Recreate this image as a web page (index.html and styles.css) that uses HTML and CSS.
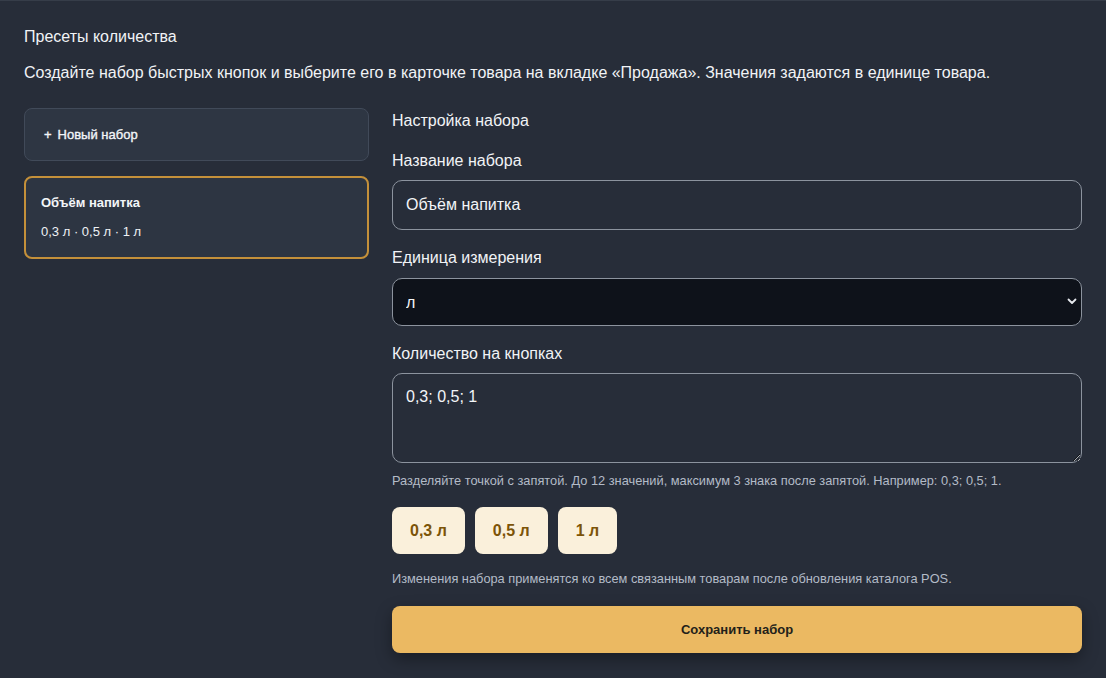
FILE: index.html
```html
<!DOCTYPE html>
<html lang="ru">
<head>
<meta charset="utf-8">
<title>Пресеты количества</title>
<link rel="stylesheet" href="styles.css">
</head>
<body>
<div class="page">
  <h1 class="title">Пресеты количества</h1>
  <p class="desc">Создайте набор быстрых кнопок и выберите его в карточке товара на вкладке «Продажа». Значения задаются в единице товара.</p>
  <div class="layout">
    <aside class="sets">
      <button class="set-new" type="button"><span class="plus">+</span>Новый набор</button>
      <div class="set-card active">
        <div class="set-name">Объём напитка</div>
        <div class="set-values">0,3 л · 0,5 л · 1 л</div>
      </div>
    </aside>
    <section class="editor">
      <h2 class="editor-title">Настройка набора</h2>
      <div class="field">
        <label class="label" for="name">Название набора</label>
        <input id="name" class="input" type="text" value="Объём напитка">
      </div>
      <div class="field">
        <label class="label" for="unit">Единица измерения</label>
        <div class="select-wrap">
          <select id="unit" class="select"><option>л</option></select>
          <svg class="chev" width="10" height="7" viewBox="0 0 10 7"><path d="M1.5 1.5 L5 5 L8.5 1.5" fill="none" stroke="#e6e9ee" stroke-width="1.8" stroke-linecap="round" stroke-linejoin="round"/></svg>
        </div>
      </div>
      <div class="field">
        <label class="label" for="qty">Количество на кнопках</label>
        <textarea id="qty" class="textarea">0,3; 0,5; 1</textarea>
        <div class="hint">Разделяйте точкой с запятой. До 12 значений, максимум 3 знака после запятой. Например: 0,3; 0,5; 1.</div>
      </div>
      <div class="chips">
        <span class="chip">0,3 л</span>
        <span class="chip">0,5 л</span>
        <span class="chip">1 л</span>
      </div>
      <div class="note">Изменения набора применятся ко всем связанным товарам после обновления каталога POS.</div>
      <button class="save" type="button">Сохранить набор</button>
    </section>
  </div>
</div>
</body>
</html>
```

FILE: styles.css
```css
* { box-sizing: border-box; }
html, body { margin: 0; padding: 0; }
body {
  background: #272d39;
  color: #eef1f5;
  font-family: "Liberation Sans", Arial, sans-serif;
  border-top: 1px solid #363d49;
  min-height: 678px;
}
.page {
  padding: 26px 24px 24px 24px;
}
.title {
  margin: 0;
  font-size: 16px;
  font-weight: 400;
  line-height: 20px;
  color: #f1f3f6;
}
.desc {
  margin: 16px 0 0 0;
  font-size: 16px;
  line-height: 20px;
  color: #f1f3f6;
}
.layout {
  margin-top: 25px;
  display: grid;
  grid-template-columns: 345px 1fr;
  column-gap: 23px;
  align-items: start;
}
.sets {
  display: flex;
  flex-direction: column;
  gap: 15px;
}
.set-new {
  display: flex;
  align-items: center;
  height: 53px;
  padding: 0 19px;
  background: #2e3643;
  border: 1px solid #414a59;
  border-radius: 8px;
  color: #f3f5f8;
  font-family: inherit;
  font-size: 13px;
  font-weight: 400;
  -webkit-text-stroke: 0.35px #f3f5f8;
  text-align: left;
}
.plus { margin-right: 6px; }
.set-card {
  background: #2d3542;
  border: 2px solid #c4903a;
  border-radius: 8px;
  padding: 16px 15px 17px 15px;
}
.set-name {
  font-size: 13px;
  font-weight: 700;
  line-height: 17px;
  color: #f3f5f8;
}
.set-values {
  margin-top: 12px;
  font-size: 13px;
  line-height: 17px;
  color: #eef1f5;
}
.editor {
  display: flex;
  flex-direction: column;
}
.editor-title {
  margin: 3px 0 0 0;
  font-size: 16px;
  font-weight: 400;
  line-height: 20px;
  color: #f1f3f6;
}
.field {
  display: flex;
  flex-direction: column;
  margin-top: 20px;
}
.field + .field { margin-top: 18px; }
.field:last-of-type { margin-top: 20px; }
.label {
  font-size: 16px;
  line-height: 20px;
  color: #f1f3f6;
  margin-bottom: 10px;
}
.field:first-of-type .label { margin-bottom: 9px; }
.input {
  height: 50px;
  padding: 0 13px;
  background: #272d39;
  border: 1px solid #8c939e;
  border-radius: 10px;
  color: #f3f5f8;
  font-family: inherit;
  font-size: 16px;
  outline: none;
}
.select-wrap { position: relative; }
.select {
  width: 100%;
  height: 48px;
  padding: 0 13px;
  background: #0e121a;
  border: 1px solid #8c939e;
  border-radius: 10px;
  color: #f3f5f8;
  font-family: inherit;
  font-size: 16px;
  appearance: none;
  -webkit-appearance: none;
  outline: none;
}
.chev {
  position: absolute;
  right: 5px;
  top: 20px;
  pointer-events: none;
}
.textarea {
  height: 90px;
  margin-top: -1px;
  padding: 13px 13px;
  background: #272d39;
  border: 1px solid #8c939e;
  border-radius: 10px;
  color: #f3f5f8;
  font-family: inherit;
  font-size: 16px;
  line-height: 20px;
  resize: vertical;
  outline: none;
  color-scheme: dark;
}
.hint {
  margin-top: 10px;
  font-size: 12.8px;
  line-height: 16px;
  color: #b3bbc7;
}
.chips {
  display: flex;
  gap: 10px;
  margin-top: 18px;
}
.chip {
  display: inline-flex;
  align-items: center;
  height: 47px;
  padding: 0 18px;
  background: #faf0db;
  border-radius: 8px;
  color: #7c5408;
  font-size: 16px;
  font-weight: 700;
}
.note {
  margin-top: 17px;
  font-size: 12.8px;
  line-height: 16px;
  color: #b3bbc7;
}
.save {
  margin-top: 19px;
  height: 47px;
  background: #ebb962;
  border: none;
  border-radius: 8px;
  color: #231f1a;
  font-family: inherit;
  font-size: 13px;
  font-weight: 700;
  box-shadow: 0 6px 16px rgba(0, 0, 0, 0.35);
}
```
